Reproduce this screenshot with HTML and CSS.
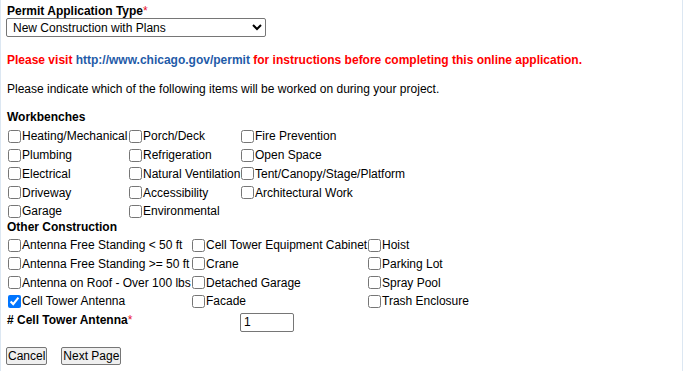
FILE: index.html
```html
<!DOCTYPE html>
<html lang="en">
<head>
    <meta charset="UTF-8">
    <meta name="viewport" content="width=device-width, initial-scale=1.0">
    <title>Permit Application</title>
    <link rel="stylesheet" href="styles.css">
</head>
<body>
    <div class="page">
        <form class="permit-form">
            <label class="field-label" for="permitType">Permit Application Type<span class="req">*</span></label>
            <select id="permitType" class="type-select">
                <option>New Construction with Plans</option>
            </select>

            <p class="notice">Please visit <a href="#">http://www.chicago.gov/permit</a> for instructions before completing this online application.</p>

            <p class="intro">Please indicate which of the following items will be worked on during your project.</p>

            <div class="group-title">Workbenches</div>
            <div class="check-grid workbenches">
                <label><input type="checkbox">Heating/Mechanical</label>
                <label><input type="checkbox">Porch/Deck</label>
                <label><input type="checkbox">Fire Prevention</label>
                <label><input type="checkbox">Plumbing</label>
                <label><input type="checkbox">Refrigeration</label>
                <label><input type="checkbox">Open Space</label>
                <label><input type="checkbox">Electrical</label>
                <label><input type="checkbox">Natural Ventilation</label>
                <label><input type="checkbox">Tent/Canopy/Stage/Platform</label>
                <label><input type="checkbox">Driveway</label>
                <label><input type="checkbox">Accessibility</label>
                <label><input type="checkbox">Architectural Work</label>
                <label><input type="checkbox">Garage</label>
                <label><input type="checkbox">Environmental</label>
            </div>

            <div class="group-title">Other Construction</div>
            <div class="check-grid other">
                <label><input type="checkbox">Antenna Free Standing &lt; 50 ft</label>
                <label><input type="checkbox">Cell Tower Equipment Cabinet</label>
                <label><input type="checkbox">Hoist</label>
                <label><input type="checkbox">Antenna Free Standing &gt;= 50 ft</label>
                <label><input type="checkbox">Crane</label>
                <label><input type="checkbox">Parking Lot</label>
                <label><input type="checkbox">Antenna on Roof - Over 100 lbs</label>
                <label><input type="checkbox">Detached Garage</label>
                <label><input type="checkbox">Spray Pool</label>
                <label><input type="checkbox" checked>Cell Tower Antenna</label>
                <label><input type="checkbox">Facade</label>
                <label><input type="checkbox">Trash Enclosure</label>
            </div>

            <div class="count-row">
                <label class="field-label count-label" for="antennaCount"># Cell Tower Antenna<span class="req">*</span></label>
                <input type="text" id="antennaCount" class="count-input" value="1">
            </div>

            <div class="actions">
                <button type="button">Cancel</button>
                <button type="button">Next Page</button>
            </div>
        </form>
    </div>
</body>
</html>
```

FILE: styles.css
```css
body {
    margin: 0;
    font-family: "Liberation Sans", Arial, sans-serif;
    font-size: 12px;
    color: #000;
    background-color: #fff;
}

.page {
    min-height: 100vh;
    box-sizing: border-box;
    border-left: 1px solid #dce7f2;
    border-right: 1px solid #dce7f2;
    padding: 4px 0 0 5px;
}

.field-label {
    display: block;
    font-weight: bold;
    line-height: 15px;
    padding-left: 1px;
}

.req {
    color: #e8102a;
    font-weight: normal;
}

.type-select {
    display: block;
    width: 260px;
    height: 19px;
    margin: -1px 0 0;
    padding: 0 0 0 2px;
    font-family: "Liberation Sans", Arial, sans-serif;
    font-size: 12px;
    border: 1px solid #767676;
    border-radius: 2px;
    background-color: #fff;
}

.notice {
    margin: 16px 0 0;
    padding-left: 1px;
    line-height: 15px;
    color: #ff0000;
    font-weight: bold;
}

.notice a {
    color: #1f5ba8;
    text-decoration: none;
}

.intro {
    margin: 14px 0 0;
    padding-left: 1px;
    line-height: 15px;
}

.group-title {
    font-weight: bold;
    line-height: 15px;
    margin-top: 13px;
    padding-left: 1px;
}

.check-grid {
    display: grid;
    grid-auto-rows: 18.75px;
    margin-top: 2px;
}

.check-grid + .group-title {
    margin-top: -1px;
}

.workbenches {
    grid-template-columns: 121px 112px auto;
}

.other {
    grid-template-columns: 184px 176px auto;
    margin-top: 1px;
}

.check-grid label {
    display: flex;
    align-items: center;
    white-space: nowrap;
}

.check-grid input {
    width: 13px;
    height: 13px;
    margin: 0 1px 0 2px;
}

.count-row {
    display: flex;
    align-items: center;
    margin-top: 2px;
}

.count-label {
    width: 233px;
    margin-top: -3px;
}

.count-input {
    width: 54px;
    height: 19px;
    box-sizing: border-box;
    margin: 0;
    padding: 0 3px;
    font-family: "Liberation Sans", Arial, sans-serif;
    font-size: 12px;
    border: 1px solid #767676;
    border-radius: 2px;
}

.actions {
    display: flex;
    gap: 14px;
    margin-top: 15px;
}

.actions button {
    height: 18px;
    margin: 0;
    padding: 0 1px;
    font-family: "Liberation Sans", Arial, sans-serif;
    font-size: 12px;
    color: #000;
    background-color: #efefef;
    border: 1px solid #767676;
    border-radius: 2px;
}
```
